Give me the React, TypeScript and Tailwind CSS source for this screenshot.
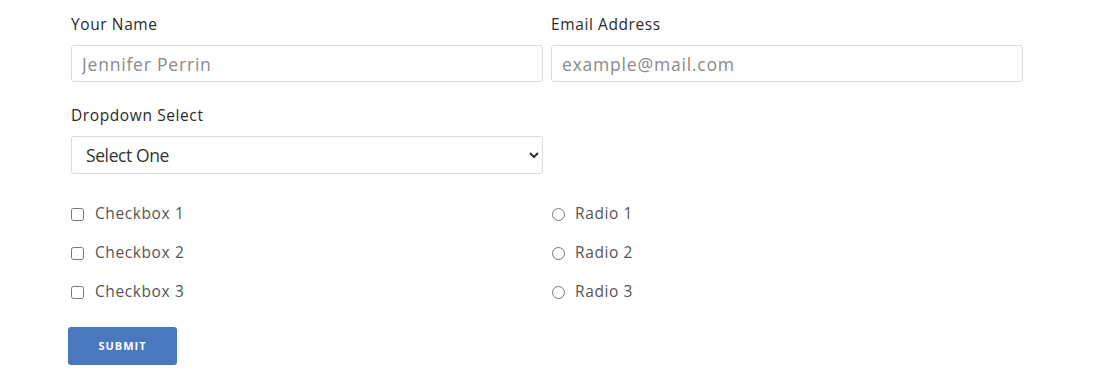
import React from "react";

const font = { fontFamily: "'Open Sans', 'Noto Sans', sans-serif" };

export default function App() {
  return (
    <div className="w-[1110px] h-[379px] bg-white pl-[67px] pt-[12px]" style={font}>
      <div className="w-[960px]">
        <div className="flex">
          <div className="w-[480px] px-1">
            <label className="block text-[15.5px] tracking-[0.6px] leading-6 text-[#2a2a2a] mb-[9px]">Your Name</label>
            <input
              className="w-full h-[37px] border border-[#dcdcdc] rounded-[3px] px-[10px] text-[17.5px] tracking-[0.8px] text-[#444] placeholder:text-[#8a8a8a] outline-none"
              placeholder="Jennifer Perrin"
            />
          </div>
          <div className="w-[480px] px-1">
            <label className="block text-[15.5px] tracking-[0.6px] leading-6 text-[#2a2a2a] mb-[9px]">Email Address</label>
            <input
              className="w-full h-[37px] border border-[#dcdcdc] rounded-[3px] px-[10px] text-[17.5px] tracking-[0.8px] text-[#444] placeholder:text-[#8a8a8a] outline-none"
              placeholder="example@mail.com"
            />
          </div>
        </div>
        <div className="flex mt-[21px]">
          <div className="w-[480px] px-1">
            <label className="block text-[15.5px] tracking-[0.6px] leading-6 text-[#2a2a2a] mb-[9px]">Dropdown Select</label>
            <select className="w-full h-[38px] border border-[#dcdcdc] rounded-[3px] pl-[10px] pr-[4px] text-[17.5px] tracking-[-0.4px] text-[#333] bg-white outline-none">
              <option>Select One</option>
            </select>
          </div>
        </div>
        <div className="flex mt-[28px]">
          <div className="w-[480px] px-1 flex flex-col gap-[15px]">
            {[1, 2, 3].map((n) => (
              <label key={n} className="flex items-center h-[24px] text-[15.5px] tracking-[0.6px] text-[#555]">
                <input type="checkbox" className="m-0 ml-0 mr-[11px] w-[13px] h-[13px]" />
                Checkbox {n}
              </label>
            ))}
          </div>
          <div className="w-[480px] px-1 flex flex-col gap-[15px]">
            {[1, 2, 3].map((n) => (
              <label key={n} className="flex items-center h-[24px] text-[15.5px] tracking-[0.6px] text-[#555]">
                <input type="radio" name="r" className="m-0 ml-[1px] mr-[10px] w-[13px] h-[13px]" />
                Radio {n}
              </label>
            ))}
          </div>
        </div>
        <button className="mt-[23px] ml-[1px] w-[109px] h-[38px] rounded-[3px] bg-[#4a78bf] text-white text-[11px] font-bold tracking-[1px] uppercase">
          Submit
        </button>
      </div>
    </div>
  );
}
